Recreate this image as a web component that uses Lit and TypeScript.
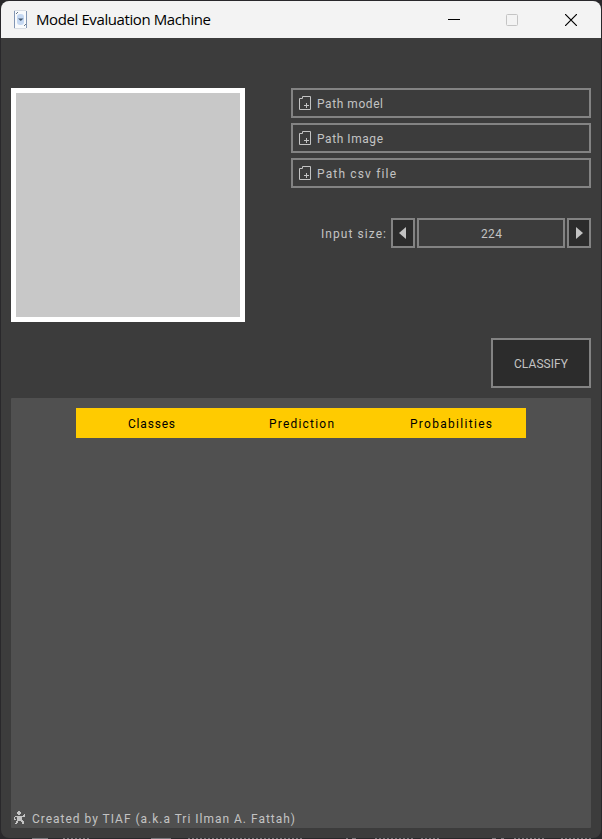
import { LitElement, html, css, svg } from "lit";
import { customElement, property } from "lit/decorators.js";

/** Horizontal condensation of the interface letters. */
const CONDENSE = 0.92;

/** One line of interface text, spaced out to a fixed width. */
@customElement("ui-label")
class UiLabel extends LitElement {
  @property() text = "";
  @property({ type: Number }) width = 50;
  static styles = css`
    :host { display: block; flex: none; height: 16px; }
    svg { display: block; overflow: visible; }
    text { font: 13px Roboto, "Liberation Sans", sans-serif; font-variant-ligatures: none; fill: currentColor; white-space: pre; }
  `;
  render() {
    return html`<svg width=${this.width} height="16"><text x="0" y="13" transform="scale(${CONDENSE} 1)" textLength=${this.width / CONDENSE}>${this.text}</text></svg>`;
  }
}

const fileIcon = svg`<path d="M3.5 .5H11.5V13.5H.5V2.5H3.5Z M7.5 7V12 M5 9.5H10" fill="none" stroke="#c3c3c3"/>`;

@customElement("app-root")
class AppRoot extends LitElement {
  static styles = css`
    :host { display: block; width: 602px; height: 839px; background: #29282b; overflow: hidden; color: #c3c3c3; }
    * { box-sizing: border-box; }
    svg { display: block; flex: none; }
    .desktop { height: 839px; padding: 1px 1px 0; }
    .window { width: 600px; height: 837px; background: #3c3c3c; border-radius: 8px; overflow: hidden; display: flex; flex-direction: column; }
    .behind { fill: none; stroke: #77767a; }
    .title { height: 37px; flex: none; background: #f3f3f3; color: #000; display: flex; align-items: center; padding-left: 12px; }
    .title span { font: 15px/20px "Open Sans", "Noto Sans", sans-serif; margin-left: 8px; flex: 1; }
    .name { display: block; overflow: visible; }
    .controls { display: flex; gap: 46px; padding-right: 24px; }
    .controls svg:not(:last-child) { margin-left: -1px; margin-right: 1px; }
    .top { display: flex; justify-content: space-between; padding: 50px 10px 0; height: 300px; flex: none; }
    .preview { width: 234px; height: 234px; background: #c8c8c8; border: 5px solid #fff; }
    .form { width: 300px; display: flex; flex-direction: column; gap: 5px; }
    .box { border: 2px solid #838383; height: 30px; display: flex; align-items: center; justify-content: center; flex: none; }
    .path { justify-content: flex-start; padding-left: 6px; gap: 6px; }
    .size { display: flex; align-items: center; justify-content: flex-end; gap: 2px; margin-top: 25px; }
    .size ui-label { margin-right: 3px; }
    .box ui-label { margin-right: 0; }
    .dark { background: #2c2c2c; }
    .arrow { width: 24px; }
    .prev { padding-right: 1px; }
    .next { padding-left: 1px; }
    .value { width: 148px; }
    .classify { width: 100px; height: 50px; align-self: flex-end; margin-top: 85px; }
    .results { margin: 60px 10px 10px; flex: 1; background: #505050; border-radius: 1px; padding-top: 10px; display: flex; flex-direction: column; justify-content: space-between; align-items: center; }
    .head { width: 450px; height: 30px; background: #ffcb00; color: #000; display: grid; grid-template-columns: repeat(3, 1fr); align-items: center; justify-items: center; }
    .credit { align-self: flex-start; display: flex; align-items: center; gap: 6px; padding: 0 0 2px 3px; }
  `;
  render() {
    return html`<div class="desktop"><div class="window">
      <header class="title">
        <svg width="15" height="20"><path d="M1 1H13L14 18H1Z" fill="#f8fafc"/><path d="M1.5 1V18M13.5 1V18" stroke="#8296b4"/><path d="M1 .5H13M1 18.5H13" stroke="#d8dde4"/><rect x="4" y="4" width="7" height="11" rx="3" fill="#c5d8f2"/><path d="M5 8.5H10.5L7.8 11Z" fill="#41566c"/><path d="M3 4L5 2M11 16L13 14" stroke="#66788c"/></svg>
        <span><svg class="name" width="176" height="20"><text x="0" y="15" textLength="175">Model Evaluation Machine</text></svg></span>
        <div class="controls">
          <svg width="12" height="12"><path d="M0 5.5H12" stroke="#000"/></svg>
          <svg width="12" height="12"><rect x=".5" y=".5" width="11" height="11" rx="1" fill="none" stroke="#c4c4c4"/></svg>
          <svg width="12" height="12"><path d="M0 0L12 12M12 0L0 12" stroke="#000" stroke-width="1.2"/></svg>
        </div>
      </header>
      <section class="top">
        <div class="preview"></div>
        <div class="form">
          ${([["Path model", 66], ["Path Image", 66], ["Path csv file", 79]] as [string, number][]).map(([t, w]) => html`<div class="box path"><svg width="12" height="14">${fileIcon}</svg><ui-label .text=${t} .width=${w}></ui-label></div>`)}
          <div class="size">
            <ui-label text="Input size:" width="65"></ui-label>
            <div class="box dark arrow prev"><svg width="7" height="12"><path d="M7 0V12L0 6Z" fill="#c3c3c3"/></svg></div>
            <div class="box value"><ui-label text="224" width="21"></ui-label></div>
            <div class="box dark arrow next"><svg width="7" height="12"><path d="M0 0V12L7 6Z" fill="#c3c3c3"/></svg></div>
          </div>
          <div class="box dark classify"><ui-label text="CLASSIFY" width="54"></ui-label></div>
        </div>
      </section>
      <section class="results">
        <div class="head"><ui-label text="Classes" width="47"></ui-label><ui-label text="Prediction" width="65"></ui-label><ui-label text="Probabilities" width="82"></ui-label></div>
        <div class="credit">
          <svg width="12" height="14" shape-rendering="crispEdges"><path d="M4 0H6V1H7V3H6V4H4V3H3V1H4ZM1 5H9V4H10V3H11V6H8V9H9V10H10V13H8V11H7V10H4V12H3V13H1V12H2V10H3V6H1V8H2V9H0V6H1Z" fill="#c3c3c3"/></svg>
          <ui-label text="Created by TIAF (a.k.a Tri Ilman A. Fattah)" width="263"></ui-label>
        </div>
      </section>
    </div>
    <svg width="600" height="1"><path class="behind" stroke-dasharray="2 2" d="M62 .5H90M187 .5H302M374 .5H412M420 .5H440M513 .5H545M560 .5H590"/><path class="behind" d="M31 .5H47M150 .5H170M345 .5H347M351 .5H355M491 .5H495M500 .5H503"/></svg>
    </div>`;
  }
}
